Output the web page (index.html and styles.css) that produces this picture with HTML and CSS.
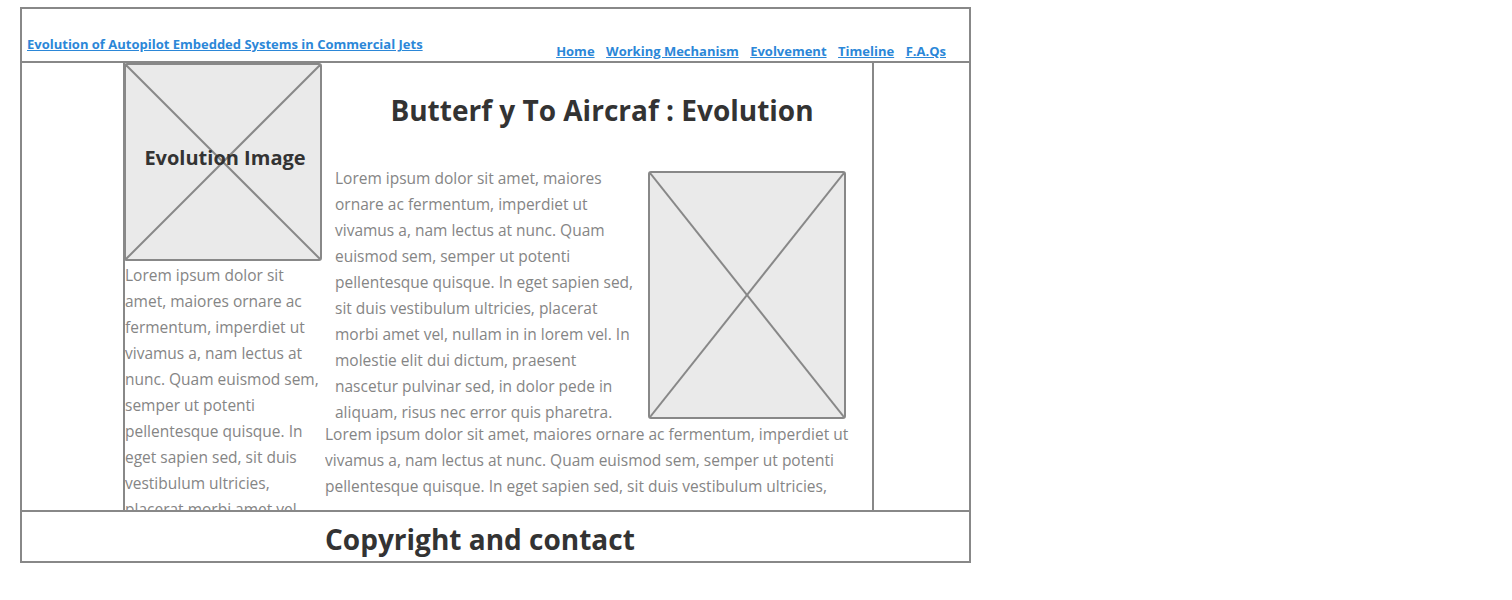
FILE: index.html
```html
<!DOCTYPE html>
<html>
<head>
<meta charset="utf-8">
<link rel="stylesheet" href="styles.css">
</head>
<body>
<div class="page">
  <header class="header">
    <a class="site-title" href="#">Evolution of Autopilot Embedded Systems in Commercial Jets</a>
    <nav class="nav">
      <a href="#">Home</a>
      <a href="#">Working Mechanism</a>
      <a href="#">Evolvement</a>
      <a href="#">Timeline</a>
      <a href="#">F.A.Qs</a>
    </nav>
  </header>
  <main class="main">
    <div class="spacer"></div>
    <aside class="left-col">
      <div class="ph ph-left">
        <svg class="ph-x" viewBox="0 0 100 100" preserveAspectRatio="none"><line x1="0" y1="0" x2="100" y2="100" vector-effect="non-scaling-stroke"/><line x1="100" y1="0" x2="0" y2="100" vector-effect="non-scaling-stroke"/></svg>
        <span class="ph-label">Evolution Image</span>
      </div>
      <p class="text left-text">Lorem ipsum dolor sit amet, maiores ornare ac fermentum, imperdiet ut vivamus a, nam lectus at nunc. Quam euismod sem, semper ut potenti pellentesque quisque. In eget sapien sed, sit duis vestibulum ultricies, placerat morbi amet vel, nullam in in lorem vel.</p>
    </aside>
    <section class="mid-col">
      <h1 class="title">Butterf y To Aircraf : Evolution</h1>
      <div class="row">
        <p class="text para1">Lorem ipsum dolor sit amet, maiores ornare ac fermentum, imperdiet ut vivamus a, nam lectus at nunc. Quam euismod sem, semper ut potenti pellentesque quisque. In eget sapien sed, sit duis vestibulum ultricies, placerat morbi amet vel, nullam in in lorem vel. In molestie elit dui dictum, praesent nascetur pulvinar sed, in dolor pede in aliquam, risus nec error quis pharetra.</p>
        <div class="ph ph-right">
          <svg class="ph-x" viewBox="0 0 100 100" preserveAspectRatio="none"><line x1="0" y1="0" x2="100" y2="100" vector-effect="non-scaling-stroke"/><line x1="100" y1="0" x2="0" y2="100" vector-effect="non-scaling-stroke"/></svg>
        </div>
      </div>
      <p class="text para2">Lorem ipsum dolor sit amet, maiores ornare ac fermentum, imperdiet ut vivamus a, nam lectus at nunc. Quam euismod sem, semper ut potenti pellentesque quisque. In eget sapien sed, sit duis vestibulum ultricies, placerat morbi amet vel, nullam in in lorem vel.</p>
    </section>
    <aside class="right-col"></aside>
  </main>
  <footer class="footer">
    <h2 class="footer-text">Copyright and contact</h2>
  </footer>
</div>
</body>
</html>
```

FILE: styles.css
```css
* { box-sizing: border-box; }
html, body { margin: 0; padding: 0; background: #fff; }
body { font-family: "Open Sans", Lato, sans-serif; }

.page {
  margin: 7px 0 0 20px;
  width: 951px;
  border: 2px solid #888;
  display: flex;
  flex-direction: column;
}

.header {
  height: 54px;
  border-bottom: 2px solid #888;
  display: flex;
  align-items: flex-end;
  justify-content: space-between;
  padding: 0 23px 0 5px;
}
.header a {
  color: #2b87d8;
  font-weight: 700;
  font-size: 13px;
  line-height: 16px;
  text-decoration: underline;
}
.site-title { padding-bottom: 9px; }
.nav { display: flex; gap: 11.5px; padding-bottom: 2px; }

.main {
  height: 447px;
  display: flex;
  overflow: hidden;
}
.spacer { width: 101px; flex: none; }
.left-col {
  width: 199px;
  flex: none;
  border-left: 2px solid #888;
  overflow: hidden;
}
.mid-col {
  width: 547px;
  flex: none;
  margin-left: 3px;
  padding-right: 26px;
}
.right-col {
  flex: 1;
  border-left: 2px solid #888;
}

.ph {
  position: relative;
  background: #eaeaea;
  border: 2px solid #888;
  border-radius: 3px;
  flex: none;
}
.ph-x { position: absolute; inset: 0; width: 100%; height: 100%; }
.ph-x line { stroke: #888; stroke-width: 2; }
.ph-left {
  width: 198px;
  height: 198px;
  margin-left: -1px;
  display: flex;
  align-items: center;
  justify-content: center;
}
.ph-label {
  position: relative;
  font-weight: 700;
  font-size: 20px;
  color: #333;
  margin-top: -10px;
  margin-left: 4px;
  white-space: nowrap;
}
.ph-right {
  width: 198px;
  height: 248px;
  margin-top: 6px;
}

.text {
  margin: 0;
  color: #858585;
  font-size: 15.5px;
  line-height: 26px;
}
.left-text { margin-top: 1px; }

.title {
  margin: 29px 0 37px;
  padding-left: 33px;
  font-size: 28px;
  line-height: 36px;
  font-weight: 700;
  color: #333;
  text-align: center;
  white-space: nowrap;
}
.row {
  display: flex;
  justify-content: space-between;
  align-items: flex-start;
  height: 256px;
}
.para1 { width: 310px; padding-left: 10px; }
.para2 { width: 530px; max-height: 78px; overflow: hidden; }

.footer {
  height: 51px;
  border-top: 2px solid #888;
  padding: 9px 0 0 303px;
}
.footer-text {
  margin: 0;
  font-size: 28px;
  line-height: 36px;
  font-weight: 700;
  color: #333;
}
```
